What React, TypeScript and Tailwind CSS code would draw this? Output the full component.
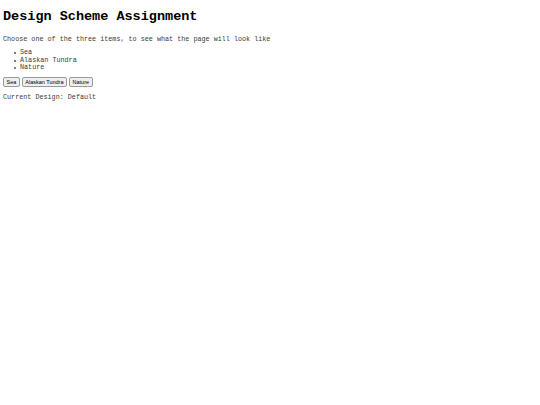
import { useState } from 'react'

const schemes = ['Sea', 'Alaskan Tundra', 'Nature']

export default function App() {
  const [current, setCurrent] = useState('Default')

  return (
    <div className="min-h-[405px] bg-white px-[3px] pt-[9px] font-['Liberation_Mono',monospace] text-[#3a3a3a]">
      <h1 className="text-[13.5px] leading-[15px] font-bold text-black">Design Scheme Assignment</h1>

      <p className="mt-[11px] text-[6.75px] leading-[8px]">
        Choose one of the three items, to see what the page will look like
      </p>

      <ul className="mt-[6px] pl-[11px] text-[6.75px] leading-[7.7px]">
        {schemes.map((s) => (
          <li key={s} className="flex items-center">
            <span className="mr-[4px] h-[2px] w-[2px] rounded-full bg-[#555]" />
            {s}
          </li>
        ))}
      </ul>

      <div className="mt-[5px] flex gap-[2px]">
        {schemes.map((s) => (
          <button
            key={s}
            onClick={() => setCurrent(s)}
            className="h-[10px] rounded-[2px] border border-[#9a9a9a] bg-[#efefef] px-[2.5px] font-['Liberation_Sans',Arial,sans-serif] text-[5.5px] leading-[8px] text-black"
          >
            {s}
          </button>
        ))}
      </div>

      <p className="mt-[6px] text-[6.75px] leading-[8px]">Current Design: {current}</p>
    </div>
  )
}
